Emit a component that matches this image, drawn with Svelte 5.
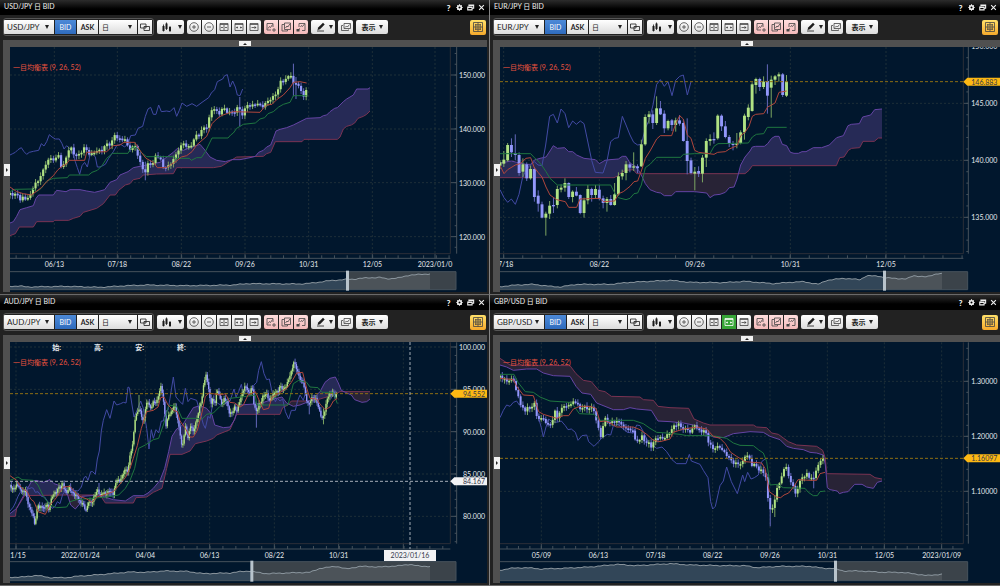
<script>
    // series are stored in thirds of a pixel, measured from the panel's left edge
    const UNIT = 3;

    const icons = {
        link: { stroke: "M2.500 4h5.500v4h-5.500zM6 6.500h5.500v4h-5.500z", fill: "" },
        candles: { stroke: "M3.500 4.500v7M6.500 2.500v7.500M10 6v6", fill: "M2.500 6h2v5h-2zM5.500 3.500h2v5.500h-2zM9 7h2v4h-2z" },
        zoomIn: { stroke: "M7 2.700a4.300 4.300 0 1 0 .01 0M5 7h4M7 5v4", fill: "" },
        zoomOut: { stroke: "M7 2.700a4.300 4.300 0 1 0 .01 0M5 7h4", fill: "" },
        fitAll: { stroke: "M3 3.500h8v7H3zM3 4.500h8M7 5v5M4 7.500h2M8 7.500h2", fill: "" },
        fitWidth: { stroke: "M3 3.500h8v7H3zM3 4.500h8M4.500 7.500h1.500M8 7.500h1.500", fill: "M4 7.500l1.500-1.200v2.400zM10 7.500l-1.500-1.200v2.400z" },
        latest: { stroke: "M3 3.500h8v7H3zM3 4.500h8M4.500 7.500h3", fill: "M9.500 7.500l-2-1.500v3z" },
        addLine: { stroke: "M9 7V3.500H3v6.500h4M4 8.500l1.500-2 1 1L8.500 4.500M10 8v4M8 10h4", fill: "" },
        multiLine: { stroke: "M5.500 3h6v6.500h-6zM5 4.500H3v6.500h5.500V10M6.500 8l1.500-2 .8 1 2-3", fill: "" },
        editLine: { stroke: "M5 7V3.500h6v7H8M6.500 7l1-1.500 1 1L10.500 4M3 10.500l3-2", fill: "M2.500 9h3v2.500h-3z" },
        pencil: { stroke: "M3 11h7", fill: "M3.500 10l.7-2.500L9 2.800l1.700 1.700L6 9.300z" },
        windows: { stroke: "M5 3.500h6.500v5h-6.500zM4 5.500H2.500V10.500h7V9.500M6 7.500l1.500-1.500 1 1L10.500 4.500", fill: "" },
        layout: { stroke: "M2.500 2.500h9v9h-9zM7 2.500v9M2.500 7h9M4 4.800h6M4 9.200h6M4.800 4v6M9.200 4v6", fill: "" },
        gear: { stroke: "M7 3v8M3 7h8M4.200 4.200l5.600 5.600M9.800 4.200l-5.600 5.600", fill: "" },
        restore: { stroke: "M5 5.500V4h6v4H9.500M3.500 6.500h5.500v3.500H3.500zM5 4.500h6M3.500 7h5.500", fill: "" },
        close: { stroke: "M4 4l6 6M10 4l-6 6", fill: "" },
    };
    const zoomTools = ["zoomIn", "zoomOut", "fitAll", "fitWidth", "latest"];
    const lineTools = ["addLine", "multiLine", "editLine"];
    const windowTools = ["gear", "restore", "close"];

    const usd = {
        pair: "USD/JPY",
        side: "BID",
        view: [10, 2, 477, 245],
        top: 6, plotBottom: 626, axisY: 640, labelY: 657, plotRight: 1351, axisX: 1370, priceX: 1380,
        xMajors: [[163, "06/13"], [352, "07/18"], [544, "08/22"], [735, "09/26"], [926, "10/31"], [1117, "12/05"], [1305, "2023/01/0"]],
        xStep: 38.2,
        yMajors: [[90, "150.000"], [252, "140.000"], [413, "130.000"], [575, "120.000"]],
        yStep: 32.3,
        step: 7.66,
        closes: "30,444 38,450 54,448 60,466 70,456 80,464 90,452 98,432 102,412 110,418 118,400 126,382 134,370 140,346 150,342 166,344 174,324 180,352 188,380 194,340 202,334 208,306 216,312 224,332 240,328 248,314 256,304 262,322 272,330 282,322 292,316 302,318 310,312 318,294 326,302 336,290 342,268 350,276 358,284 376,282 386,316 396,306 408,304 416,344 424,360 434,388 440,364 448,350 456,366 464,334 472,334 480,334 486,368 494,366 502,362 510,366 516,342 524,340 532,322 540,304 550,296 556,304 562,300 570,310 578,294 584,272 598,272 606,250 614,250 622,244 630,206 638,192 646,188 654,210 662,206 668,180 678,204 686,198 696,204 704,200 710,188 718,188 724,214 734,196 738,178 744,180 752,184 764,178 774,176 786,186 796,176 806,166 814,160 824,152 832,138 842,110 850,108 860,100 868,92 876,88 882,128 890,112 898,124 906,150 912,154 920,130",
        spikes: [[720, 156, 245], [882, 56, 154], [890, 96, 162], [438, 350, 406]],
        chikou: "30,330 38,326 46,322 54,314 64,308 72,320 80,328 88,322 100,319 116,316 124,296 132,303 140,290 148,269 156,276 166,282 178,282 186,296 192,312 200,302 208,310 216,318 226,350 232,368 239,388 246,362 254,352 262,366 270,330 278,328 286,336 292,366 300,366 316,358 326,340 340,320 350,302 362,298 374,306 384,296 392,272 406,270 414,250 428,244 436,214 444,192 452,187 460,208 468,208 476,180 484,200 500,198 510,200 522,188 530,214 538,196 546,174 560,184 576,176 590,184 606,172 626,158 634,144 644,134 652,110 668,102 674,92 682,89 690,126 698,108 706,126 712,150 720,152 728,132",
        tenkan: "30,426 50,440 70,446 94,450 108,440 124,428 140,410 160,392 174,374 186,364 200,356 208,346 254,346 260,322 320,320 340,302 360,300 372,292 404,292 412,304 424,322 438,340 460,352 472,368 500,368 514,358 530,348 544,336 560,332 576,320 590,300 606,286 620,274 636,236 650,222 664,212 680,206 700,200 780,202 790,190 800,180 816,178 830,164 850,150 870,128 880,112 900,110 920,114",
        kijun: "30,440 44,433 98,432 110,440 124,430 140,408 160,400 202,398 208,390 266,390 276,382 292,376 306,362 320,340 338,325 384,325 392,310 404,306 414,312 428,326 440,335 520,335 528,340 568,340 574,346 590,338 604,338 616,320 636,279 684,279 692,270 700,264 710,250 730,238 766,234 780,222 794,218 804,206 820,200 836,186 850,178 870,172 880,152 920,152",
        spanA: "30,534 40,530 50,514 60,494 80,488 100,482 108,460 116,450 160,450 170,436 198,440 210,434 240,434 260,438 284,442 300,438 314,434 330,412 350,404 360,390 384,380 400,368 420,364 440,360 480,352 490,344 520,322 532,310 550,316 570,308 600,298 612,312 630,336 650,346 676,350 696,344 720,344 750,338 766,334 776,322 790,316 800,306 812,300 820,280 828,258 840,253 860,248 880,240 900,230 920,220 960,218 970,212 980,210 990,200 1004,190 1012,188 1030,170 1040,162 1060,150 1070,132 1104,132 1110,128",
        spanB: "30,572 46,566 58,546 100,546 110,530 160,530 164,526 206,526 220,520 240,514 250,502 270,496 290,490 310,476 330,450 346,450 356,436 376,420 390,416 400,404 420,400 430,390 470,387 520,386 530,368 640,368 664,364 690,348 710,336 790,334 800,326 812,322 826,290 906,290 912,283 1012,283 1020,276 1030,252 1040,244 1054,240 1064,234 1074,220 1090,214 1100,208 1110,198",
        nav: { top: 680, bottom: 734, handle: 1041, right: 1368, line: "30,724 60,723 80,726 200,724 300,727 380,722 440,720 560,722 640,721 700,720 740,716 900,717 940,714 980,708 1040,703 1060,703 1080,700 1140,697 1160,702 1200,698 1230,690 1270,688 1295,686" },
    };

    const eur = {
        pair: "EUR/JPY",
        side: "BID",
        view: [10, 2, 500, 245],
        top: 6, plotBottom: 626, axisY: 640, labelY: 657, plotRight: 1420, axisX: 1435, priceX: 1447,
        xMajors: [[41, "07/18"], [328, "08/22"], [615, "09/26"], [901, "10/31"], [1188, "12/05"]],
        xStep: 57.3,
        yMajors: [[4, "150.000"], [175, "145.000"], [346, "140.000"], [517, "135.000"]],
        yStep: 34.2,
        step: 11.46,
        // rising?, high, body top, body bottom, low
        candles: [
            [1, 346, 352, 362, 372], [1, 318, 344, 356, 366], [1, 294, 300, 346, 350], [0, 280, 300, 322, 336], [0, 268, 324, 330, 346],
            [0, 322, 330, 384, 392], [1, 340, 358, 380, 396], [0, 352, 358, 400, 408], [1, 362, 372, 400, 404], [0, 366, 372, 456, 470],
            [0, 436, 452, 476, 500], [0, 470, 478, 518, 520], [1, 500, 506, 518, 572], [1, 468, 482, 506, 522], [0, 456, 480, 484, 504],
            [1, 422, 432, 480, 490], [1, 418, 428, 434, 442], [1, 400, 414, 428, 440], [0, 412, 414, 456, 462], [1, 436, 440, 456, 472],
            [0, 426, 440, 452, 454], [0, 448, 450, 504, 508], [1, 458, 466, 504, 518], [1, 420, 432, 466, 478], [0, 428, 432, 450, 470],
            [1, 420, 432, 450, 460], [0, 420, 434, 462, 466], [0, 452, 460, 474, 490], [1, 456, 462, 474, 500], [0, 450, 462, 480, 482],
            [1, 414, 448, 480, 482], [1, 382, 394, 448, 452], [1, 374, 384, 394, 404], [1, 348, 358, 384, 406], [0, 352, 358, 368, 382],
            [1, 322, 364, 368, 378], [0, 358, 364, 370, 384], [1, 284, 298, 364, 366], [1, 208, 216, 298, 302], [1, 198, 208, 216, 236],
            [0, 196, 208, 234, 252], [1, 154, 190, 234, 240], [0, 168, 190, 208, 210], [0, 196, 206, 250, 264], [1, 224, 228, 250, 256],
            [0, 222, 226, 240, 258], [1, 218, 226, 240, 260], [0, 210, 226, 236, 242], [0, 222, 234, 288, 290], [0, 220, 288, 348, 388],
            [0, 338, 346, 384, 388], [1, 366, 380, 386, 436], [0, 364, 378, 386, 396], [1, 330, 338, 386, 412], [1, 280, 288, 338, 366],
            [1, 268, 282, 288, 302], [0, 262, 282, 286, 296], [1, 208, 212, 280, 284], [0, 208, 212, 244, 258], [0, 228, 244, 276, 280],
            [0, 270, 276, 296, 306], [0, 288, 296, 300, 316], [1, 264, 294, 300, 310], [1, 256, 262, 294, 298], [1, 206, 212, 262, 284],
            [1, 178, 188, 216, 226], [1, 112, 118, 198, 200], [1, 98, 102, 120, 146], [0, 98, 102, 126, 138], [1, 94, 110, 126, 132],
            [0, 58, 108, 152, 206], [1, 92, 104, 128, 218], [1, 90, 94, 104, 120], [1, 82, 88, 94, 110], [0, 84, 88, 150, 156],
            [1, 90, 110, 152, 156],
        ],
        chikou: "30,434 42,458 53,472 64,462 76,478 87,448 98,396 110,372 121,360 133,350 144,360 156,362 167,300 179,214 190,208 202,234 213,192 225,206 236,248 248,228 259,238 271,228 282,236 293,288 305,346 316,382 339,384 351,348 362,290 374,280 385,278 397,214 408,240 420,270 431,292 443,300 454,298 466,250 477,226 489,180 500,118 511,104 523,124 534,110 546,152 557,106 569,94 580,90 592,150 603,110",
        tenkan: "30,362 42,386 53,374 76,360 90,356 108,340 122,338 132,366 144,382 156,396 168,426 180,450 200,464 226,470 236,487 260,487 270,462 330,460 340,470 374,468 386,446 400,440 420,424 432,410 443,408 454,378 466,340 480,318 500,282 511,272 545,272 557,236 569,212 580,222 592,270 603,280 614,316 626,322 672,328 683,322 706,320 718,312 741,302 752,272 765,262 777,244 787,214 797,208 821,206 833,186 845,180 855,174 867,142 890,138",
        kijun: "30,326 122,326 133,338 144,348 156,362 168,380 180,400 202,420 362,420 372,440 385,458 408,464 420,460 432,446 443,444 454,420 466,368 480,358 500,337 572,337 580,328 614,326 660,326 672,304 684,296 775,294 787,276 799,268 821,266 832,247 890,247",
        spanA: "30,354 64,348 80,352 96,356 110,358 122,358 133,345 150,340 168,336 180,318 190,302 202,310 224,308 236,320 248,320 260,330 282,340 300,342 316,344 328,356 345,346 360,344 385,342 397,334 408,334 420,354 440,366 454,390 466,416 480,434 500,442 512,444 523,452 545,452 557,440 614,440 650,444 660,458 672,450 690,448 706,442 718,428 732,426 741,402 752,360 765,336 780,318 787,306 797,304 823,304 833,296 845,280 855,274 867,274 877,298 890,302 901,322 912,325 925,325 936,320 948,320 970,308 995,308 1018,300 1040,278 1060,272 1074,242 1084,238 1108,236 1118,216 1142,210 1154,194 1176,192",
        spanB: "30,398 372,398 384,392 397,380 410,376 430,374 440,386 765,386 777,376 787,362 1039,362 1049,338 1062,336 1075,316 1085,310 1109,308 1119,289 1153,289 1165,279 1176,279",
        last: { y: 110, label: "146.883" },
        nav: { top: 680, bottom: 734, handle: 1182, right: 1433, line: "30,725 80,720 130,718 180,724 210,726 260,718 360,718 420,712 540,706 600,712 700,713 765,709 850,716 900,712 940,710 985,718 1010,706 1060,700 1110,704 1130,692 1170,694 1182,698 1210,700 1250,702 1270,692 1310,696 1340,686 1358,686" },
    };

    const aud = {
        pair: "AUD/JPY",
        side: "BID",
        view: [10, 47, 477, 241],
        top: 142, plotBottom: 746, axisY: 762, labelY: 779, plotRight: 1351, axisX: 1370, priceX: 1380,
        xMajors: [[48, "11/15"], [241, "2022/01/24"], [436, "04/04"], [629, "06/13"], [823, "08/22"], [1016, "10/31"], [1210, ""]],
        xStep: 38.8,
        yMajors: [[156, "100.000"], [283, "95.000"], [410, "90.000"], [537, "85.000"], [664, "80.000"]],
        yStep: 25.4,
        step: 3.87,
        closes: "30,570 36,582 44,580 52,566 60,584 70,590 76,582 82,620 92,646 98,656 104,690 108,664 114,628 120,640 126,632 134,640 140,622 146,646 152,618 160,598 170,590 176,576 184,578 188,562 194,586 200,592 208,578 214,590 222,598 232,604 240,622 248,624 258,648 266,620 276,624 284,600 294,584 300,604 308,592 318,598 328,586 340,598 346,570 350,552 358,560 368,540 376,522 384,530 390,480 398,450 404,380 412,348 420,344 430,384 438,330 444,320 452,342 460,320 470,322 478,290 484,272 490,316 498,392 506,360 514,352 524,328 532,370 540,412 546,462 556,396 564,430 572,390 580,410 590,376 598,340 606,310 612,260 618,240 626,280 632,330 638,310 644,330 650,290 656,290 664,330 672,312 682,320 686,352 696,354 704,336 710,350 718,322 728,290 734,276 740,276 748,300 756,270 762,330 770,352 776,330 784,320 790,300 800,296 808,318 816,304 824,292 834,290 840,272 850,284 860,270 868,246 874,230 882,200 890,222 896,240 902,256 910,262 918,310 926,330 934,310 940,308 948,312 956,340 962,360 968,374 976,340 982,310 988,300 998,290 1004,306 1010,296",
        spikes: [[416, 300, 350], [770, 330, 398], [970, 340, 388], [296, 564, 590], [928, 320, 358]],
        chikou: "30,648 40,636 46,624 54,604 62,590 72,596 80,574 86,582 94,578 100,580 106,592 114,590 124,604 134,606 146,624 156,640 164,636 172,620 180,626 188,598 196,588 204,594 212,582 222,586 234,588 244,576 252,548 258,544 264,556 272,530 278,530 286,538 292,492 298,468 304,408 310,376 320,344 330,370 342,318 350,330 362,326 370,322 378,324 384,276 388,278 396,330 402,366 412,344 422,318 430,340 440,400 447,462 454,404 460,430 468,404 476,414 484,378 490,378 496,350 504,346 510,310 520,246 528,306 540,320 548,328 556,280 564,320 572,310 590,316 600,352 610,388 616,400 624,364 630,370 640,318 652,324 662,330 672,324 682,312 690,318 702,282 708,306 716,290 724,268 730,300 740,280 750,290 762,270 770,262 776,226 784,200 792,236 800,254 808,252 816,290 826,320 832,310 840,318 848,312 856,350 866,372 874,346 886,346 892,320 900,300 910,316 916,296",
        tenkan: "30,542 50,556 64,578 82,590 92,612 102,620 114,650 136,658 150,630 166,612 190,576 210,574 224,590 240,604 260,612 276,622 290,606 310,600 340,590 356,572 376,548 390,520 400,490 412,452 424,400 440,350 460,346 474,336 482,308 492,306 504,330 520,346 532,350 540,378 556,400 570,426 580,426 592,406 606,352 616,304 628,294 660,300 676,296 690,322 704,324 720,336 730,330 744,300 766,290 790,344 806,340 816,306 834,296 860,280 874,262 890,234 908,232 920,280 930,310 950,312 962,330 976,344 990,336 1000,318 1012,310",
        kijun: "30,556 54,546 66,554 100,556 114,570 130,604 150,630 170,638 200,636 210,620 230,614 320,606 356,600 376,580 390,556 404,520 416,460 436,450 460,434 476,430 490,390 500,356 506,330 530,334 546,370 590,370 606,372 620,358 640,354 660,334 690,310 740,304 766,300 770,330 864,330 880,266 896,256 920,262 930,276 954,278 966,292 1000,292 1012,326",
        spanA: "30,656 50,640 66,610 80,586 94,560 108,556 130,562 150,554 162,566 186,574 200,590 212,630 226,642 238,628 246,604 300,600 320,608 340,614 376,618 400,602 430,602 444,594 460,580 480,556 494,520 506,470 516,424 530,402 548,390 560,370 580,338 600,332 620,340 636,360 644,390 670,398 690,396 704,374 716,330 780,326 820,312 846,306 860,324 880,334 900,330 920,322 940,310 960,290 975,262 990,250 1006,246 1014,262 1024,286 1036,292 1054,300 1064,314 1086,322 1100,320 1110,312",
        spanB: "30,664 46,664 50,640 74,602 200,600 300,600 316,624 400,624 408,608 440,606 460,592 486,580 500,520 510,478 546,478 570,468 586,446 620,438 640,430 650,420 690,404 710,358 840,358 848,338 864,330 874,318 900,318 930,318 960,312 1000,300 1020,290 1110,290",
        last: { y: 296, label: "94.552" },
        cross: { x: 1230, y: 559, price: "84.167", date: "2023/01/16" },
        ohlc: [[157, "始:"], [282, "高:"], [406, "安:"], [531, "終:"]],
        nav: { top: 800, bottom: 857, handle: 754, right: 1368, line: "30,847 70,846 110,841 150,848 200,848 230,844 310,838 390,831 440,832 490,828 560,829 610,836 690,834 720,830 750,828 770,832 800,836 860,834 930,832 960,820 1010,814 1040,822 1080,814 1140,816 1200,812 1230,808 1260,814 1295,814" },
    };

    const gbp = {
        pair: "GBP/USD",
        side: "BID",
        active: "fitWidth",
        view: [10, 47, 500, 241],
        top: 142, plotBottom: 746, axisY: 762, labelY: 779, plotRight: 1420, axisX: 1435, priceX: 1447,
        xMajors: [[154, "05/09"], [325, "06/13"], [497, "07/18"], [668, "08/22"], [840, "09/26"], [1012, "10/31"], [1183, "12/05"], [1355, "2023/01/09"]],
        xStep: 34.3,
        yMajors: [[259, "1.30000"], [424, "1.20000"], [589, "1.10000"]],
        yStep: 33,
        step: 6.87,
        closes: "30,242 38,250 50,258 60,256 70,250 78,286 86,308 94,334 108,352 114,328 120,342 134,322 140,366 150,370 160,372 168,382 178,394 186,380 196,346 202,368 212,346 222,330 230,336 240,326 250,322 262,322 270,346 282,330 292,346 300,334 310,342 318,372 326,404 334,430 342,372 350,370 356,388 366,380 390,380 402,400 412,396 420,410 428,402 436,438 446,440 454,420 464,440 476,444 484,456 494,434 506,426 516,430 526,426 540,412 548,396 566,386 574,400 590,402 604,414 612,386 622,402 632,410 646,406 654,438 668,462 680,456 690,456 700,470 710,480 720,492 730,504 742,506 756,506 766,480 776,484 785,510 795,508 806,524 818,528 828,548 834,614 840,640 850,640 856,606 862,572 870,566 878,530 886,510 894,536 904,566 912,580 918,598 926,576 934,540 942,552 950,532 960,552 970,550 976,532 984,514 992,494 1004,490",
        spikes: [[840, 600, 694], [853, 600, 666], [971, 530, 580]],
        chikou: "30,368 40,346 50,330 60,334 70,322 80,318 88,330 96,334 110,344 124,340 138,330 146,370 154,398 160,426 168,396 176,372 186,380 200,382 214,378 226,392 234,404 244,402 256,412 264,436 276,422 290,420 296,440 312,454 326,440 334,430 352,418 362,420 370,392 384,388 400,402 412,412 430,414 440,390 450,392 460,410 476,444 486,450 500,460 516,456 530,470 546,494 560,506 588,506 598,478 604,498 630,508 640,526 654,548 662,620 668,642 676,634 690,572 700,558 710,516 724,560 742,596 758,540 764,560 773,532 783,552 793,548 805,540 815,500 825,492",
        tenkan: "30,250 70,254 80,274 100,300 130,302 146,350 160,358 200,370 220,362 236,362 250,342 270,334 300,334 318,340 330,380 345,378 360,384 380,396 430,396 450,404 470,418 490,436 510,440 540,432 550,412 580,402 620,396 650,402 670,424 690,430 706,446 722,472 740,484 756,494 765,500 815,504 825,520 838,590 860,606 872,608 882,600 896,594 912,574 924,554 960,556 980,556 990,536 1005,532",
        kijun: "30,238 72,238 84,262 106,290 130,292 150,306 180,318 240,322 254,336 268,356 312,358 330,376 430,376 460,386 480,400 500,412 530,414 570,418 590,422 654,422 680,424 710,430 730,444 750,451 790,452 805,464 820,474 830,500 840,570 862,568 880,578 945,580 955,592 970,602 982,602 990,590 1005,588",
        spanA: "30,210 50,216 70,226 110,222 140,222 160,234 190,242 240,244 258,274 276,294 302,298 320,324 345,334 370,344 400,344 420,338 440,342 484,346 504,378 540,380 580,384 620,392 650,416 670,426 700,428 730,416 780,410 820,412 840,424 870,434 890,454 910,460 940,464 960,472 980,474 1000,480 1006,510 1012,578 1020,584 1042,588 1048,596 1060,592 1074,590 1094,568 1116,568 1130,576 1150,580 1162,562 1176,558",
        spanB: "30,190 60,210 240,212 258,236 280,256 304,260 326,286 345,290 364,304 450,306 460,314 490,316 504,334 540,338 596,340 612,372 640,384 660,390 790,390 800,396 830,398 845,414 865,418 895,440 920,450 980,454 998,466 1006,490 1010,536 1140,538 1155,548 1176,552",
        last: { y: 490, label: "1.16097" },
        nav: { top: 800, bottom: 857, handle: 1035, right: 1433, line: "30,826 60,820 110,818 150,822 220,820 300,816 380,808 440,812 540,806 600,810 700,812 765,812 800,818 870,814 960,814 1000,820 1030,820 1060,828 1110,828 1180,832 1230,832 1270,836 1310,842 1325,840 1357,838" },
    };

    let panels = [usd, eur, aud, gbp];

    const parse = (str) => str.split(" ").map((p) => p.split(",").map(Number));
    const toPath = (pts) => "M" + pts.map(([x, y]) => `${(x / UNIT).toFixed(2)} ${(y / UNIT).toFixed(2)}`).join("L");
    const line = (str) => toPath(parse(str));

    function valueAt(pts, x) {
        for (let i = 1; i < pts.length; i++) {
            if (x <= pts[i][0]) {
                const [x0, y0] = pts[i - 1];
                const [x1, y1] = pts[i];
                return y0 + ((y1 - y0) * (x - x0)) / (x1 - x0);
            }
        }
        return pts[pts.length - 1][1];
    }

    // candle: [x, rising, high, top, bottom, low]
    function getCandles(chart) {
        if (chart.candles) {
            return chart.candles.map((c, i) => [30 + i * chart.step, ...c]);
        }
        const pts = parse(chart.closes);
        const end = pts[pts.length - 1][0];
        const out = [];
        let open = pts[0][1] + 6;
        for (let x = 30, i = 0; x <= end + 1; x += chart.step, i++) {
            const close = valueAt(pts, x) + Math.sin(i * 2.3) * 3;
            const top = Math.min(open, close);
            const bottom = Math.max(open, close, top + 5);
            let high = top - 3 - Math.abs(Math.sin(i * 1.7)) * 8;
            let low = bottom + 3 + Math.abs(Math.cos(i * 2.9)) * 8;
            const spike = (chart.spikes || []).find((s) => Math.abs(s[0] - x) <= chart.step / 2);
            if (spike) {
                high = Math.min(top, spike[1]);
                low = Math.max(bottom, spike[2]);
            }
            out.push([x, close <= open, high, top, bottom, low]);
            open = close;
        }
        return out;
    }

    // narrow candles touch each other, wide ones keep a gap
    const bodyWidth = (chart) => (chart.step > 10 ? chart.step * 0.76 : Math.max(chart.step * 0.86, 4)) / UNIT;

    // splits the cloud where the two spans cross, so that each part gets its own colour
    function getClouds(chart) {
        const a = parse(chart.spanA);
        const b = parse(chart.spanB);
        const end = a[a.length - 1][0];
        const parts = [];
        let part = null;
        for (let x = 30; x <= end; x += 2) {
            const ya = valueAt(a, x);
            const yb = valueAt(b, x);
            const up = ya <= yb;
            if (!part || part.up !== up) {
                part = { up, a: [], b: [] };
                parts.push(part);
            }
            part.a.push([x, ya]);
            part.b.unshift([x, yb]);
        }
        return parts.map((p) => ({ up: p.up, d: toPath([...p.a, ...p.b]) + "Z" }));
    }

    function ticks(start, step, min, max) {
        const out = [];
        const first = start - Math.floor((start - min) / step) * step;
        for (let v = first; v <= max; v += step) out.push(v / UNIT);
        return out;
    }

    function navPoints(nav) {
        const pts = parse(nav.line);
        const end = pts[pts.length - 1][0];
        const out = [];
        for (let x = 30, i = 0; x <= end; x += 6, i++) {
            out.push([x, valueAt(pts, x) + Math.sin(i * 1.9) * 0.9 + Math.sin(i * 0.7) * 0.8]);
        }
        return out;
    }

    function navArea(nav) {
        const pts = navPoints(nav);
        return toPath([[30, nav.bottom], ...pts, [pts[pts.length - 1][0], nav.bottom]]) + "Z";
    }

    const setSide = (i, side) => () => (panels[i].side = side);
</script>

{#snippet icon(name)}
    <svg class="icon" viewBox="0 0 14 14" aria-hidden="true">
        <path class="icon-stroke" d={icons[name].stroke} />
        <path class="icon-fill" d={icons[name].fill} />
        {#if name === "gear"}
            <circle class="gear-ring" cx="7" cy="7" r="2.3" />
        {/if}
    </svg>
{/snippet}

<main class="desk">
    {#each panels as chart, i}
        <section class="panel">
            <header class="title">
                <h2>{chart.pair} 日 BID</h2>
                <button aria-label="ヘルプ">?</button>
                {#each windowTools as tool}
                    <button aria-label={tool}>{@render icon(tool)}</button>
                {/each}
            </header>

            <div class="toolbar">
                <div class="group framed">
                    <label class="drop pair">
                        <select aria-label="通貨ペア">
                            <option>{chart.pair}</option>
                        </select>
                    </label>
                    <button class="side" class:on={chart.side === "BID"} on:click={setSide(i, "BID")}>BID</button>
                    <button class="side" class:on={chart.side === "ASK"} on:click={setSide(i, "ASK")}>ASK</button>
                    <label class="drop period">
                        <select aria-label="足種">
                            <option>日</option>
                        </select>
                    </label>
                    <button class="tool" aria-label="link">{@render icon("link")}</button>
                </div>
                <button class="wide dark" aria-label="candles">{@render icon("candles")}<i class="caret"></i></button>
                <div class="group">
                    {#each zoomTools as tool}
                        <button class="tool" class:green={chart.active === tool} aria-label={tool}>{@render icon(tool)}</button>
                    {/each}
                </div>
                <div class="group pink">
                    {#each lineTools as tool}
                        <button class="tool" aria-label={tool}>{@render icon(tool)}</button>
                    {/each}
                </div>
                <button class="wide dark pen" aria-label="pencil">{@render icon("pencil")}<i class="caret"></i></button>
                <button class="tool single" aria-label="windows">{@render icon("windows")}</button>
                <button class="wide dark show">表示<i class="caret"></i></button>
                <button class="layout" aria-label="layout">{@render icon("layout")}</button>
            </div>

            <div class="hbar"><button aria-label="上部パネル"><i class="up"></i></button></div>

            <div class="body">
                <div class="vbar"><button aria-label="左パネル"><i class="right"></i></button></div>
                <svg class="chart" viewBox={chart.view.join(" ")}>
                    {#each chart.xMajors as [x]}
                        <line class="grid" x1={x / 3} x2={x / 3} y1={chart.top / 3} y2={chart.plotBottom / 3} />
                        <line class="axis" x1={x / 3} x2={x / 3} y1={chart.plotBottom / 3} y2={chart.axisY / 3} />
                    {/each}
                    {#each chart.yMajors as [y]}
                        <line class="grid" x1="10" x2={chart.plotRight / 3} y1={y / 3} y2={y / 3} />
                        <line class="axis" x1={chart.plotRight / 3} x2={chart.axisX / 3} y1={y / 3} y2={y / 3} />
                    {/each}
                    <path class="frame" d="M10 {chart.plotBottom / 3}H{chart.plotRight / 3}V{chart.top / 3}" />
                    <line class="axis" x1="10" x2={chart.plotRight / 3} y1={chart.axisY / 3} y2={chart.axisY / 3} />
                    <line class="axis" x1={chart.axisX / 3} x2={chart.axisX / 3} y1={chart.top / 3} y2={chart.plotBottom / 3} />
                    {#each ticks(chart.xMajors[0][0], chart.xStep, 32, chart.plotRight) as x}
                        <line class="axis" x1={x} x2={x} y1={chart.axisY / 3 - 3} y2={chart.axisY / 3} />
                    {/each}
                    {#each ticks(chart.yMajors[0][0], chart.yStep, chart.top, chart.plotBottom) as y}
                        <line class="axis" x1={chart.axisX / 3 - 2} x2={chart.axisX / 3} y1={y} y2={y} />
                    {/each}

                    {#each getClouds(chart) as cloud}
                        <path class={cloud.up ? "cloud-up" : "cloud-down"} d={cloud.d} />
                    {/each}
                    <path class="span-b" d={line(chart.spanB)} />
                    <path class="span-a" d={line(chart.spanA)} />
                    <path class="chikou" d={line(chart.chikou)} />
                    {#each getCandles(chart) as [x, rising, high, top, bottom, low]}
                        <g class={rising ? "rise" : "fall"}>
                            <line x1={x / 3} x2={x / 3} y1={high / 3} y2={low / 3} />
                            <rect x={x / 3 - bodyWidth(chart) / 2} y={top / 3} width={bodyWidth(chart)} height={(bottom - top) / 3} />
                        </g>
                    {/each}
                    <path class="kijun" d={line(chart.kijun)} />
                    <path class="tenkan" d={line(chart.tenkan)} />

                    <text class="indicator" x="13" y={chart.view[1] + 20}>一目均衡表 (9, 26, 52)</text>
                    {#each chart.ohlc || [] as [x, label]}
                        <text class="label ohlc" x={x / 3} y="52">{label}</text>
                    {/each}
                    {#each chart.xMajors as [x, label]}
                        <text class="label mid" x={x / 3} y={chart.labelY / 3}>{label}</text>
                    {/each}
                    {#each chart.yMajors as [y, label]}
                        <text class="label end" x={chart.priceX / 3 + 25} y={y / 3}>{label}</text>
                    {/each}

                    {#if chart.last}
                        <line class="last" x1="10" x2={chart.plotRight / 3} y1={chart.last.y / 3} y2={chart.last.y / 3} />
                        <path class="last-tag" d="M{chart.plotRight / 3} {chart.last.y / 3}l4-4h33v8h-33z" />
                        <text class="tag-text end" x={chart.priceX / 3 + 25} y={chart.last.y / 3}>{chart.last.label}</text>
                    {/if}
                    {#if chart.cross}
                        <line class="cross" x1="10" x2={chart.plotRight / 3} y1={chart.cross.y / 3} y2={chart.cross.y / 3} />
                        <line class="cross" x1={chart.cross.x / 3} x2={chart.cross.x / 3} y1="47" y2={chart.axisY / 3} />
                        <path class="cross-tag" d="M{chart.plotRight / 3} {chart.cross.y / 3}l4-4h33v8h-33z" />
                        <text class="tag-text end" x={chart.priceX / 3 + 25} y={chart.cross.y / 3}>{chart.cross.price}</text>
                        <rect class="cross-tag" x={chart.cross.x / 3 - 26} y="255" width="52" height="11" />
                        <text class="tag-text mid" x={chart.cross.x / 3} y="260">{chart.cross.date}</text>
                    {/if}

                    <path class="nav-area" d={navArea(chart.nav)} />
                    <rect class="nav-shade" x={chart.nav.handle / 3} y={chart.nav.top / 3} width={(chart.nav.right - chart.nav.handle) / 3} height={(chart.nav.bottom - chart.nav.top) / 3} />
                    <path class="nav-line" d={toPath(navPoints(chart.nav))} />
                    <path class="nav-frame" d="M10 {chart.nav.top / 3}H{chart.nav.right / 3}V{chart.nav.bottom / 3}H10" />
                    <rect class="nav-handle" x={chart.nav.handle / 3 - 1} y={chart.nav.top / 3 - 1} width="3" height={(chart.nav.bottom - chart.nav.top) / 3 + 2} />
                </svg>
            </div>
        </section>
    {/each}
</main>

<style>
    :global(body) {
        background: #1c1c1c;
    }
    .desk {
        display: grid;
        grid-template-columns: 49fr 51fr;
        font-family: Lato, "Noto Sans CJK JP", sans-serif;
        color: #f0f0f0;
    }
    .panel {
        min-width: 0;
        background: #222;
        border-bottom: 1px solid #6a6a6a;
        padding-bottom: 2px;
    }
    .panel:nth-child(odd) {
        border-right: 1px solid #858585;
    }
    button,
    select {
        font: inherit;
        color: inherit;
        margin: 0;
        padding: 0;
        border: 0;
        background: none;
        cursor: pointer;
    }
    .title {
        display: flex;
        align-items: center;
        height: 15px;
        padding: 0 2px 0 4px;
        background: linear-gradient(#2c2c2c, #000 60%);
    }
    .panel:nth-child(even) .title {
        padding-right: 1px;
    }
    h2 {
        flex: 1;
        margin: 0;
        font-size: 7px;
        font-weight: 400;
        line-height: 13px;
        height: 15px;
    }
    .title button {
        width: 11px;
        height: 14px;
        display: flex;
        align-items: center;
        justify-content: center;
        font-size: 8px;
        font-weight: 900;
    }
    .title .icon {
        width: 11px;
        height: 11px;
    }
    .icon {
        width: 14px;
        height: 14px;
        flex: none;
        display: block;
    }
    .icon-stroke {
        fill: none;
        stroke: currentColor;
        stroke-width: 0.8;
    }
    .title .icon-stroke {
        stroke-width: 1.4;
    }
    .icon-fill {
        fill: currentColor;
    }
    .gear-ring {
        fill: #000;
        stroke: currentColor;
        stroke-width: 2;
    }
    .toolbar {
        display: flex;
        align-items: center;
        gap: 3px;
        height: 24px;
        padding: 0 3px;
        color: #444;
    }
    .panel:nth-child(even) .toolbar {
        padding-right: 2px;
    }
    .group {
        display: flex;
        gap: 1px;
        border-radius: 2px;
        overflow: hidden;
    }
    .framed {
        border: 1px solid #555;
        padding: 1px 1px 1px 0;
        border-radius: 3px;
    }
    .framed,
    .toolbar .dark {
        color: #1c1c1c;
    }
    .toolbar button,
    .drop {
        height: 14px;
        display: flex;
        align-items: center;
        justify-content: center;
        background: linear-gradient(#fff, #dcdcdc);
        font-size: 7px;
        font-weight: 700;
    }
    .toolbar .tool {
        width: 14px;
    }
    .toolbar .single {
        width: 15px;
    }
    .toolbar > button {
        border-radius: 2px;
    }
    .drop {
        position: relative;
    }
    .drop select {
        appearance: none;
        width: 100%;
        height: 14px;
        padding-left: 3px;
        font-size: 8px;
        font-weight: 400;
    }
    .drop.period select {
        font-size: 7px;
    }
    .drop::after,
    .caret {
        content: "";
        border: 2px solid transparent;
        border-top: 4px solid #222;
        border-bottom: 0;
    }
    .drop::after {
        position: absolute;
        right: 5px;
        pointer-events: none;
    }
    .pair {
        width: 50px;
    }
    .period {
        width: 38px;
    }
    .toolbar .side {
        width: 21px;
    }
    .toolbar .side.on {
        background: linear-gradient(#4d8ad8, #2f6bbd);
        color: #fff;
        font-weight: 400;
    }
    .toolbar .wide {
        width: 27px;
        gap: 4px;
    }
    .toolbar .pen {
        width: 24px;
        gap: 1px;
    }
    .toolbar .show {
        width: 32px;
        gap: 3px;
    }
    .toolbar .green {
        background: #37a537;
        color: #fff;
    }
    .toolbar .pink button {
        background: linear-gradient(#ffdede, #f4b9b9);
    }
    .toolbar .layout {
        width: 16px;
        height: 15px;
        margin-left: auto;
        background: linear-gradient(#ffe06a, #f5a92c);
    }
    .hbar {
        display: flex;
        justify-content: center;
        align-items: center;
        height: 7px;
        margin: 1px 2px 0 3px;
        background: #505050;
    }
    .panel:nth-child(even) .hbar {
        margin-right: 0;
    }
    .hbar button {
        display: flex;
        align-items: center;
        justify-content: center;
        width: 12px;
        height: 5px;
        background: #f2f2f2;
    }
    .up {
        border: 2px solid transparent;
        border-bottom-color: #222;
        border-top: 0;
    }
    .body {
        display: flex;
        margin: 0 2px 0 3px;
    }
    .panel:nth-child(even) .body {
        margin-right: 0;
    }
    .vbar {
        width: 7px;
        flex: none;
        display: flex;
        align-items: center;
        justify-content: center;
        background: #505050;
    }
    .vbar button {
        display: flex;
        align-items: center;
        justify-content: center;
        width: 6px;
        height: 12px;
        background: #f2f2f2;
    }
    .right {
        border: 2px solid transparent;
        border-left-color: #222;
        border-right: 0;
    }
    .chart {
        flex: 1;
        min-width: 0;
        display: block;
        background: #01172d;
    }
    .chart text {
        dominant-baseline: central;
    }
    .chart path,
    .chart line {
        fill: none;
    }
    .grid {
        stroke: #2b3a3e;
        stroke-width: 0.7;
        stroke-dasharray: 2 2;
    }
    .axis {
        stroke: #46525c;
    }
    .frame {
        stroke: #2c2f38;
    }
    .chart .cloud-up {
        fill: #262a56;
    }
    .chart .cloud-down {
        fill: #282336;
    }
    .span-a {
        stroke: #6444a4;
    }
    .span-b {
        stroke: #7a3352;
    }
    .chikou {
        stroke: #424aa4;
    }
    .tenkan {
        stroke: #b0463c;
    }
    .kijun {
        stroke: #1f7640;
    }
    .rise {
        fill: #b0e283;
        stroke: #7ca562;
    }
    .fall {
        fill: #9297fb;
        stroke: #6468bb;
    }
    .rise rect,
    .fall rect {
        stroke: none;
    }
    .label {
        fill: #e4e8ec;
        font-size: 7px;
    }
    .ohlc {
        font-weight: 700;
    }
    .indicator {
        fill: #e8523e;
        font-size: 7px;
    }
    .mid {
        text-anchor: middle;
    }
    .end {
        text-anchor: end;
    }
    .last {
        stroke: #8e6f14;
        stroke-dasharray: 3 2;
    }
    .chart .last-tag {
        fill: #fdb813;
    }
    .cross {
        stroke: #a3adb6;
        stroke-dasharray: 3 2;
    }
    .chart .cross-tag {
        fill: #f2f2f4;
    }
    .tag-text {
        fill: #33384a;
        font-size: 7px;
    }
    .chart .nav-area {
        fill: #324658;
    }
    .nav-shade {
        fill: #5a5a5a;
        fill-opacity: 0.65;
    }
    .nav-line {
        stroke: #8c979f;
    }
    .nav-frame {
        stroke: #46525c;
    }
    .nav-handle {
        fill: #b9c4cc;
    }
</style>
